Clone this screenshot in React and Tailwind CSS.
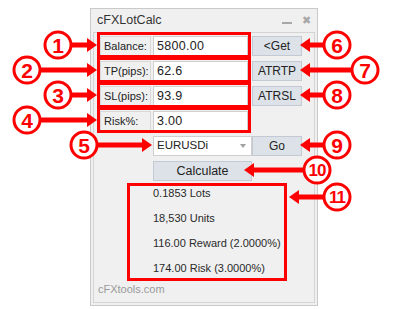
import React from "react";

const RED = "#ff0000";

// callouts: circle centre, number, arrow tip, direction
const callouts = [
  { n: "1", cx: 58, cy: 45, tip: 97, dir: 1 },
  { n: "2", cx: 27, cy: 70, tip: 97, dir: 1 },
  { n: "3", cx: 58, cy: 95, tip: 97, dir: 1 },
  { n: "4", cx: 27, cy: 120, tip: 97, dir: 1 },
  { n: "5", cx: 84, cy: 145, tip: 152, dir: 1 },
  { n: "6", cx: 337, cy: 45, tip: 300, dir: -1 },
  { n: "7", cx: 365, cy: 70, tip: 300, dir: -1 },
  { n: "8", cx: 337, cy: 95, tip: 300, dir: -1 },
  { n: "9", cx: 337, cy: 145, tip: 300, dir: -1 },
  { n: "10", cx: 317, cy: 170, tip: 244, dir: -1 },
  { n: "11", cx: 337, cy: 197, tip: 289, dir: -1 },
];

function Callouts() {
  const r = 13;
  return (
    <svg className="absolute left-0 top-0 pointer-events-none" width="396" height="309" viewBox="0 0 396 309">
      {callouts.map((c) => {
        const start = c.cx + c.dir * r;
        const base = c.tip - c.dir * 10;
        return (
          <g key={c.n}>
            <line x1={start} y1={c.cy} x2={base} y2={c.cy} stroke={RED} strokeWidth="5" />
            <polygon points={`${c.tip},${c.cy} ${base},${c.cy - 7} ${base},${c.cy + 7}`} fill={RED} />
            <circle cx={c.cx} cy={c.cy} r={r} fill="white" stroke={RED} strokeWidth="3" />
            <text
              x={c.cx}
              y={c.cy + (c.n.length > 1 ? 6 : 7.5)}
              textAnchor="middle"
              fill={RED}
              fontFamily="'Liberation Sans', Arial, sans-serif"
              fontWeight="bold"
              fontSize={c.n.length > 1 ? 17 : 21}
              letterSpacing={c.n.length > 1 ? -1 : 0}
            >
              {c.n}
            </text>
          </g>
        );
      })}
    </svg>
  );
}

function Row({ label, value, button }) {
  return (
    <div className="flex h-[20px] items-stretch">
      <div className="ml-[6px] flex w-[51px] items-center border border-[#d8d8d8] pl-[3px] text-[11px] text-[#222]">{label}</div>
      <div className="ml-[2px] flex w-[95px] items-center border border-[#cfcfcf] bg-white pl-[3px] text-[12.5px] tracking-[0.3px] text-[#222]">{value}</div>
      <button className="ml-[4px] w-[50px] border border-[#c3cad3] bg-[#dde2e9] text-[12px] text-[#222]">{button}</button>
    </div>
  );
}

export default function App() {
  return (
    <div className="relative h-[309px] w-[396px] overflow-hidden bg-white pl-[90px] pt-[8px]" style={{ fontFamily: "'Liberation Sans', Arial, sans-serif" }}>
      <div className="flex h-[298px] w-[228px] flex-col border border-[#c9c9c9] bg-[#f0f0f0] px-[2px] pb-[2px]">
        {/* title bar */}
        <div className="flex h-[23px] items-center pl-[4px] pr-[4px] text-[12.5px] text-[#333]">
          <span>cFXLotCalc</span>
          <span className="ml-auto mt-[4px] h-[2px] w-[10px] bg-[#a8a8a8]" />
          <span className="ml-[10px] text-[11px] leading-none text-[#a8a8a8]">✖</span>
        </div>

        {/* panel */}
        <div className="flex flex-1 flex-col gap-[5px] border border-[#d4d4d4] pt-[3px]">
          <Row label="Balance:" value="5800.00" button="<Get" />
          <Row label="TP(pips):" value="62.6" button="ATRTP" />
          <Row label="SL(pips):" value="93.9" button="ATRSL" />
          <div className="flex h-[20px] items-stretch">
            <div className="ml-[6px] flex w-[51px] items-center border border-[#d8d8d8] pl-[3px] text-[11px] text-[#222]">Risk%:</div>
            <div className="ml-[2px] flex w-[95px] items-center border border-[#cfcfcf] bg-white pl-[3px] text-[12.5px] tracking-[0.3px] text-[#222]">3.00</div>
          </div>
          <div className="flex h-[20px] items-stretch pl-[59px]">
            <div className="flex w-[99px] items-center border border-[#cfcfcf] bg-white pl-[3px] pr-[5px] text-[11.5px] text-[#222]">
              <span>EURUSDi</span>
              <span className="ml-auto h-0 w-0 border-x-[3.5px] border-t-[4px] border-x-transparent border-t-[#a0a0a0]" />
            </div>
            <button className="w-[50px] border border-[#c3cad3] bg-[#dde2e9] text-[12px] text-[#222]">Go</button>
          </div>
          <div className="flex h-[20px] pl-[59px]">
            <button className="w-[99px] border border-[#c3cad3] bg-[#dde2e9] text-[12.5px] text-[#222]">Calculate</button>
          </div>

          <div className="-mt-[5px] flex flex-col pl-[59px] text-[11px] text-[#2a2a2a]">
            <div className="flex h-[25px] items-center">0.1853 Lots</div>
            <div className="flex h-[25px] items-center">18,530 Units</div>
            <div className="flex h-[25px] items-center">116.00 Reward (2.0000%)</div>
            <div className="flex h-[25px] items-center">174.00 Risk (3.0000%)</div>
          </div>
          <div className="-mt-[5px] flex h-[17px] items-center pl-[4px] text-[11px] text-[#9a9a9a]">cFXtools.com</div>
        </div>
      </div>

      {/* annotation boxes */}
      <div className="absolute left-[97px] top-[32px] h-[26px] w-[154px] border-[3px] border-[#ff0000]" />
      <div className="absolute left-[97px] top-[57px] h-[26px] w-[154px] border-[3px] border-[#ff0000]" />
      <div className="absolute left-[97px] top-[82px] h-[26px] w-[154px] border-[3px] border-[#ff0000]" />
      <div className="absolute left-[97px] top-[107px] h-[26px] w-[154px] border-[3px] border-[#ff0000]" />
      <div className="absolute left-[127px] top-[183px] h-[98px] w-[160px] border-[3px] border-[#ff0000]" />

      <Callouts />
    </div>
  );
}
